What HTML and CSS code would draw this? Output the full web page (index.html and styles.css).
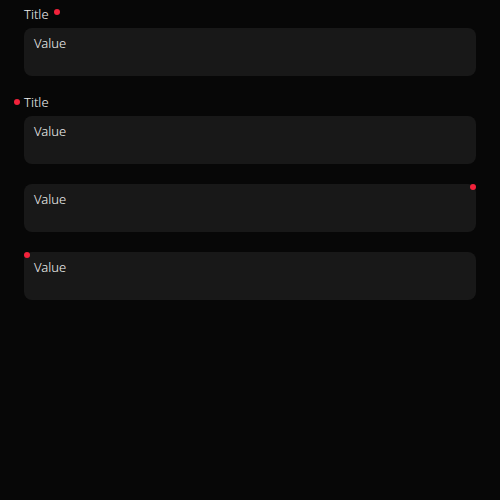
FILE: index.html
```html
<!DOCTYPE html>
<html>
<head>
<meta charset="utf-8">
<link rel="stylesheet" href="styles.css">
</head>
<body>
<div class="page">
  <div class="field">
    <div class="label"><span>Title</span><span class="dot dot-after"></span></div>
    <div class="box">Value</div>
  </div>
  <div class="field">
    <div class="label"><span class="dot dot-before"></span><span>Title</span></div>
    <div class="box">Value</div>
  </div>
  <div class="field">
    <div class="box">Value<span class="dot dot-tr"></span></div>
  </div>
  <div class="field">
    <div class="box">Value<span class="dot dot-tl"></span></div>
  </div>
</div>
</body>
</html>
```
FILE: styles.css
```css
html, body {
  margin: 0;
  padding: 0;
  background: #070707;
}
body {
  width: 500px;
  height: 500px;
  font-family: "Noto Sans", sans-serif;
  font-weight: 300;
  font-size: 13px;
  color: #f2f2f2;
}
.page {
  padding: 8px 24px;
  display: flex;
  flex-direction: column;
  gap: 20px;
}
.field {
  display: flex;
  flex-direction: column;
}
.label {
  position: relative;
  display: flex;
  align-items: center;
  gap: 5px;
  height: 16px;
  line-height: 16px;
  margin: -2px 0 6px;
}
.box {
  position: relative;
  height: 48px;
  box-sizing: border-box;
  padding: 7px 10px;
  line-height: 16px;
  background: #181818;
  border-radius: 8px;
}
.dot {
  display: block;
  width: 6px;
  height: 6px;
  border-radius: 50%;
  background: #f2223b;
}
.dot-after {
  margin-top: -5px;
}
.dot-before {
  position: absolute;
  left: -10px;
  top: 5px;
}
.dot-tr {
  position: absolute;
  top: 0;
  right: 0;
}
.dot-tl {
  position: absolute;
  top: 0;
  left: 0;
}
```
